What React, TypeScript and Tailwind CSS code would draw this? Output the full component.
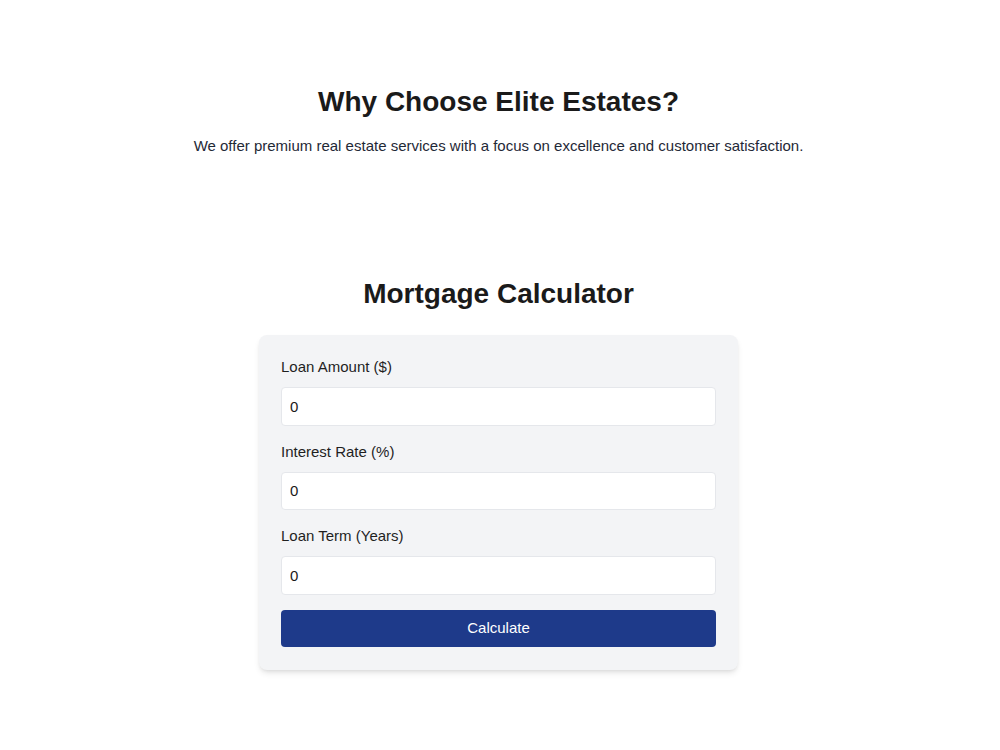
import { useState } from "react";

const fields = [
  { id: "amount", label: "Loan Amount ($)" },
  { id: "rate", label: "Interest Rate (%)" },
  { id: "term", label: "Loan Term (Years)" },
];

export default function App() {
  const [values, setValues] = useState<Record<string, string>>({
    amount: "0",
    rate: "0",
    term: "0",
  });

  return (
    <div className="min-h-screen bg-white pr-[3px] font-['Liberation_Sans',Arial,sans-serif] text-[#1a1a1a]">
      {/* Features intro */}
      <section className="pt-[85px] pb-[60px] text-center">
        <h2 className="text-[28px] leading-[34px] font-bold">Why Choose Elite Estates?</h2>
        <p className="mt-4 text-[15px] leading-[22px] text-[#1f2937]">
          We offer premium real estate services with a focus on excellence and customer satisfaction.
        </p>
      </section>

      {/* Calculator */}
      <section className="pt-[60px] pb-16 flex flex-col items-center">
        <h2 className="text-[28px] leading-[34px] font-bold mb-6">Mortgage Calculator</h2>
        <div className="w-[479px] bg-[#f3f4f6] rounded-lg shadow-md px-[22px] pt-[21px] pb-[23px]">
          {fields.map((f) => (
            <div key={f.id} className="mb-[15px]">
              <label htmlFor={f.id} className="block text-[15px] leading-[22px] mb-[9px] text-[#1f1f1f]">
                {f.label}
              </label>
              <input
                id={f.id}
                type="number"
                value={values[f.id]}
                onChange={(e) => setValues({ ...values, [f.id]: e.target.value })}
                className="w-full h-[38.5px] bg-white border border-[#e5e7eb] rounded px-2 text-[15px] text-[#1a1a1a] outline-none [appearance:textfield]"
              />
            </div>
          ))}
          <button className="w-full h-[37px] bg-[#1e3a8a] text-white text-[15px] rounded">
            Calculate
          </button>
        </div>
      </section>
    </div>
  );
}
